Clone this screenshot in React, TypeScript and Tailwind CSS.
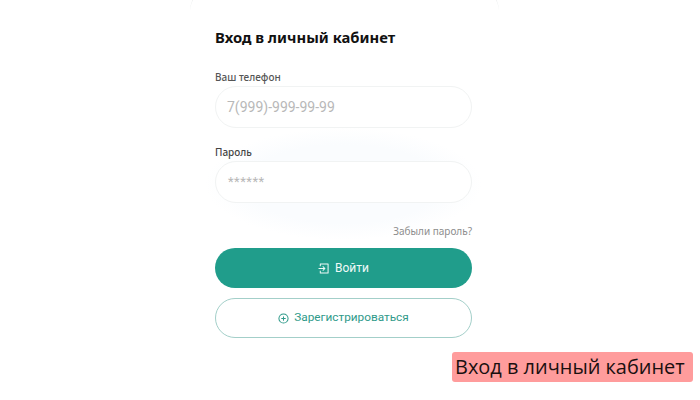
export default function App() {
  return (
    <div className="relative w-[700px] h-[400px] overflow-hidden bg-white font-['Noto_Sans',sans-serif]">
      <div className="ml-[190px] -mt-[15px] w-[309px] h-[400px] rounded-[26px] border-t-[3px] border-[#eceeee] pl-[25px] pr-[27px] pt-[38px] flex flex-col">
        <h1 className="m-0 -mt-[1px] h-[24px] text-[14.8px] leading-[24px] font-bold text-[#111] font-['Noto_Sans',sans-serif]">Вход в личный кабинет</h1>
        <label className="mt-[20px] h-[16px] text-[10px] leading-[16px] font-medium text-[#555]">Ваш телефон</label>
        <div className="mt-[1px] h-[42px] w-[257px] rounded-[21px] border border-[#f1f3f3] bg-white flex items-center pl-[11px] text-[14px] text-[#b8b8b8] font-['Roboto',sans-serif]">7(999)-999-99-99</div>
        <div className="-mx-[10px] px-[10px] pt-[16px] bg-[radial-gradient(closest-side,#fafcfe_70%,#ffffff)]">
          <label className="block h-[16px] text-[10px] leading-[16px] font-medium text-[#444]">Пароль</label>
          <div className="mt-[1px] h-[42px] w-[257px] rounded-[21px] border border-[#f1f3f3] bg-white flex items-start pt-[10px] pl-[12px] text-[13px] leading-[20px] tracking-[0.5px] text-[#b8b8b8] font-['Roboto',sans-serif]">******</div>
          <div className="mt-[19px] h-[18px] text-right text-[10px] leading-[18px] text-[#8d8d8d]">Забыли пароль?</div>
        </div>
        <button className="mt-[8px] h-[40px] w-[257px] rounded-[20px] bg-[#209d8b] flex items-center justify-center gap-[6px] text-[12px] font-normal text-[#f0faf8] font-['Roboto',sans-serif]">
          <svg width="11" height="11" viewBox="0 0 12 12" fill="none" stroke="currentColor" strokeWidth="1.1">
            <path d="M2.5 3.5V1h8.5v10H2.5V8.5" strokeLinejoin="round" />
            <path d="M1 6h6.5M5.5 4 7.5 6 5.5 8" strokeLinecap="round" strokeLinejoin="round" />
          </svg>
          Войти
        </button>
        <button className="mt-[10px] h-[40px] w-[257px] rounded-[20px] border border-[#a3cfc9] bg-white flex items-center justify-center gap-[5px] text-[11.8px] font-normal text-[#2f9a8a] font-['Roboto',sans-serif]">
          <svg width="11" height="11" viewBox="0 0 12 12" fill="none" stroke="currentColor" strokeWidth="1.1">
            <circle cx="6" cy="6" r="5" />
            <path d="M6 4v4M4 6h4" strokeLinecap="round" />
          </svg>
          Зарегистрироваться
        </button>
      </div>
      <div className="absolute left-[452px] top-[352px] w-[241px] h-[30px] rounded-[3px] bg-[#ff9c9c] pl-[3px] text-[19.95px] leading-[30px] text-[#1a1010] font-['Open_Sans',sans-serif] whitespace-nowrap">Вход в личный кабинет</div>
    </div>
  );
}
